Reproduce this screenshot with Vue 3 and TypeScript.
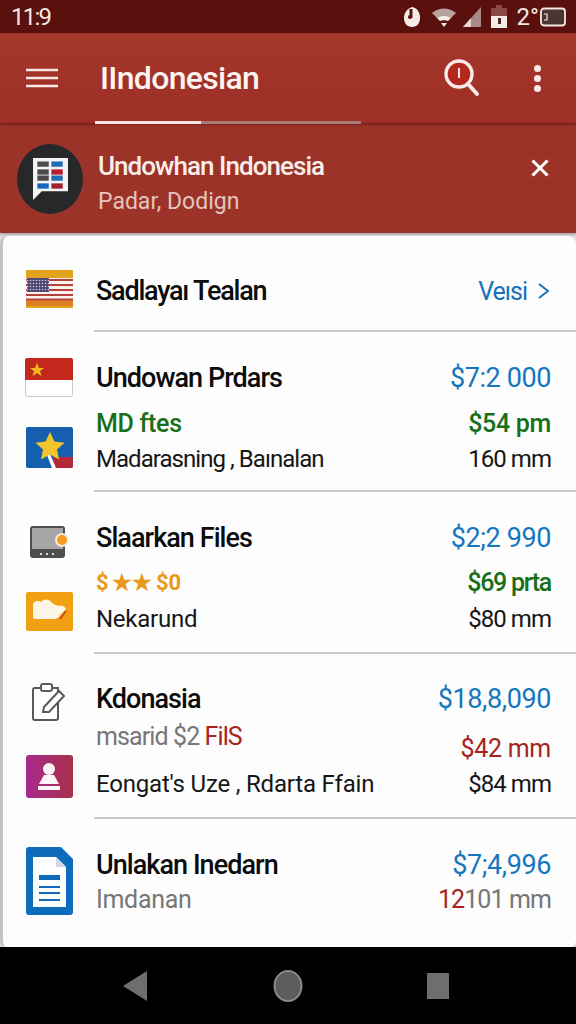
<script setup lang="ts">
const cells: [number, number, string][] = [
  [0, 0, '#4a4a4a'], [1, 0, '#1f6fb5'],
  [0, 1, '#4a4a4a'], [1, 1, '#b71c2c'],
  [0, 2, '#4a4a4a'], [1, 2, '#1f6fb5'],
  [0, 3, '#1565c0'], [1, 3, '#a3202e']
]
</script>

<template>
  <div class="screen">
    <header class="status">
      <span class="time">11:9</span>
      <div class="status-icons">
        <svg width="20" height="24" viewBox="0 0 20 24"><path d="M10 2c5 1 8 5 8 11 0 5-3 9-8 9s-8-4-8-9c0-4 2-8 6-10z" fill="#f5ece8"/><path d="M9 4v9" stroke="#5a100c" stroke-width="3"/><circle cx="8" cy="12" r="2" fill="#5a100c"/></svg>
        <svg width="26" height="22" viewBox="0 0 26 22"><path d="M1 7C8 1 18 1 25 7l-5 5c-4-3-10-3-14 0z" fill="#b9a09c"/><path d="M6 12c4-3 10-3 14 0l-3 3c-2-1-6-1-8 0z" fill="#f5ece8"/><path d="M10 17h6l-3 4z" fill="#f5ece8"/></svg>
        <svg class="signal" width="20" height="22" viewBox="0 0 20 22"><path d="M1 21L19 1v20z" fill="#a98a86"/><path d="M1 21l8-9v9z" fill="#e8d8d4"/></svg>
        <svg width="16" height="24" viewBox="0 0 16 24"><rect x="5" y="0" width="6" height="4" fill="#8a4a44"/><rect x="0" y="3" width="16" height="8" fill="#8a4a44"/><rect x="0" y="11" width="16" height="12" fill="#f5ece8"/><rect x="7" y="13" width="3" height="6" fill="#4a2a28"/></svg>
        <span class="temp">2°</span>
        <svg class="batt" width="26" height="20" viewBox="0 0 26 20"><rect x="1" y="1.500" width="24" height="17" rx="3" fill="#4c3432" stroke="#f3e8e4" stroke-width="1.800"/><path d="M4 7h3v6H4" fill="none" stroke="#f3e8e4" stroke-width="1.200"/></svg>
      </div>
    </header>

    <div class="toolbar">
      <svg class="menu" width="32" height="20" viewBox="0 0 32 20"><path d="M0 2h32M0 10h32M0 18h32" stroke="#f7e9e6" stroke-width="2.400"/></svg>
      <h1 class="app-title">IIndonesian</h1>
      <svg class="search" width="38" height="40" viewBox="0 0 38 40"><circle cx="15" cy="16" r="13" fill="#b5281f" stroke="#f8ebe8" stroke-width="3.400"/><path d="M15 10v10" stroke="#f8ebe8" stroke-width="2"/><path d="M25 27l8 9" stroke="#f8ebe8" stroke-width="4" stroke-linecap="round"/></svg>
      <div class="dots"><i></i><i></i><i></i></div>
      <div class="tabs"><span class="tab-on"></span><span class="tab-off"></span></div>
    </div>

    <section class="banner">
      <div class="avatar">
        <svg width="35" height="42" viewBox="0 0 40 48">
          <path d="M0 0h40v38H10L0 48z" fill="#f3f3f3"/>
          <rect v-for="(c, i) in cells" :key="i" :x="5 + c[0] * 16" :y="[4, 13, 20, 29][c[1]]" width="13" height="6" :fill="c[2]"/>
        </svg>
      </div>
      <div class="banner-text">
        <div class="banner-title">Undowhan Indonesia</div>
        <div class="banner-sub">Padar, Dodign</div>
      </div>
      <svg class="close" width="20" height="20" viewBox="0 0 20 20"><path d="M2.500 2.500l15 15M17.500 2.500l-15 15" stroke="#fff" stroke-width="3"/></svg>
    </section>

    <main class="card">
      <div class="row r1">
        <div class="icons">
          <svg width="47" height="38" viewBox="0 0 47 38">
            <defs>
              <pattern id="cantonDots" width="3" height="3" patternUnits="userSpaceOnUse">
                <rect width="3" height="3" fill="#4b4470"/>
                <circle cx="1.500" cy="1.500" r=".8" fill="#d8d2e0"/>
              </pattern>
            </defs>
            <rect width="47" height="38" rx="1" fill="#e2a41c"/>
            <rect y="8" width="47" height="22" fill="#fbf4ee"/>
            <path d="M0 10h47M0 15h47M0 20h47M0 25h47M0 29.500h47" stroke="#b8403c" stroke-width="1.800"/>
            <rect y="31" width="47" height="5" fill="#dc7f22"/>
            <rect x="1" y="8" width="22" height="14" fill="url(#cantonDots)"/>
          </svg>
        </div>
        <div class="body">
          <div class="line">
            <span class="title tight">Sadlayaı Tealan</span>
            <span class="link">Veısi <svg width="14" height="18" viewBox="0 0 14 18"><path d="M2 2l9 7-9 7" fill="none" stroke="#1673b8" stroke-width="2"/></svg></span>
          </div>
        </div>
      </div>

      <div class="row r2">
        <div class="icons">
          <svg width="48" height="39" viewBox="0 0 48 39">
            <rect x=".5" y=".5" width="47" height="38" rx="2" fill="#fff" stroke="#c8c8c8"/>
            <path d="M0 2a2 2 0 0 1 2-2h44a2 2 0 0 1 2 2v20H0z" fill="#c4281c"/>
            <path d="M12 5l2 5h5l-4 3 1.500 5-4.500-3-4.500 3L9 13l-4-3h5z" fill="#f4b81f"/>
          </svg>
          <svg width="47" height="41" viewBox="0 0 47 41">
            <rect width="47" height="41" rx="2" fill="#1560ae"/>
            <path d="M47 30v9a2 2 0 0 1-2 2H30l-4-7 2-4z" fill="#b32a3a"/>
            <path d="M24 27l6 14h-4l-5-13z" fill="#fff"/>
            <path d="M24 5l4.500 9.500 10 1.200-7.500 6.800 2 10-9-5-9 5 2-10-7.500-6.800 10-1.200z" fill="#f2c52c"/>
          </svg>
        </div>
        <div class="body">
          <div class="col">
            <span class="title">Undowan Prdars</span>
            <span class="sub green bold">MD ftes</span>
            <span class="sub ink">Madarasning , Baınalan</span>
          </div>
          <div class="col end">
            <span class="price">$7:2 000</span>
            <span class="sub green bold">$54 pm</span>
            <span class="sub ink">160 mm</span>
          </div>
        </div>
      </div>

      <div class="row r3">
        <div class="icons">
          <svg width="38" height="34" viewBox="0 0 38 34">
            <rect y="1" width="35" height="32" rx="3" fill="#4e4e4e"/>
            <rect x="2" y="3" width="31" height="21" fill="#a6a6a6"/>
            <path d="M10 29h2M16 29h2M22 29h2" stroke="#ddd" stroke-width="2"/>
            <circle cx="32" cy="15" r="6" fill="#f39c1f" stroke="#f5eedd" stroke-width="2"/>
          </svg>
          <svg width="47" height="39" viewBox="0 0 47 39">
            <rect width="47" height="39" rx="2" fill="#f0a012"/>
            <path d="M7 13c0-4 5-5 8-3 3-4 9-3 11 1 3 2 5 2 7 3 3-1 6 0 7 3l-5 5c-2 4-5 5-8 5H9c-2 0-2-2-2-4z" fill="#fdf6e6"/>
            <path d="M34 27l6-8" stroke="#c8402a" stroke-width="1.600"/>
          </svg>
        </div>
        <div class="body">
          <div class="col">
            <span class="title">Slaarkan Files</span>
            <span class="sub stars">$ ★★ $0</span>
            <span class="sub ink loose">Nekarund</span>
          </div>
          <div class="col end">
            <span class="price">$2;2 990</span>
            <span class="sub green bold narrow">$69 prta</span>
            <span class="sub ink">$80 mm</span>
          </div>
        </div>
      </div>

      <div class="row r4">
        <div class="icons">
          <svg width="34" height="38" viewBox="0 0 34 38">
            <path d="M20 5h6v30a2 2 0 0 1-2 2H3a2 2 0 0 1-2-2V7a2 2 0 0 1 2-2h6" fill="#fff" stroke="#5a5a5a" stroke-width="2"/>
            <rect x="9" y="1" width="11" height="7" rx="2" fill="#fff" stroke="#5a5a5a" stroke-width="2"/>
            <path d="M12 24l15-16 5 5-15 16h-6z" fill="#fff" stroke="#5a5a5a" stroke-width="2"/>
          </svg>
          <svg width="47" height="43" viewBox="0 0 47 43">
            <defs><linearGradient id="pg" x1="0" x2="1"><stop offset="0" stop-color="#a82a8e"/><stop offset="1" stop-color="#a83048"/></linearGradient></defs>
            <rect width="47" height="43" rx="3" fill="url(#pg)"/>
            <circle cx="23" cy="14" r="6" fill="#fdf4f8"/>
            <path d="M18 20h10l5 9H13z" fill="#fdf4f8"/>
            <rect x="12" y="31" width="22" height="4" fill="#fdf4f8"/>
          </svg>
        </div>
        <div class="body">
          <div class="col">
            <span class="title">Kdonasia</span>
            <span class="sub grey squeezed">msarid $2 <b class="red">FilS</b></span>
            <span class="sub ink third">Eongat's Uze , Rdarta Ffain</span>
          </div>
          <div class="col end">
            <span class="price">$18,8,090</span>
            <span class="sub red low">$42 mm</span>
            <span class="sub ink">$84 mm</span>
          </div>
        </div>
      </div>

      <div class="row r5">
        <div class="icons">
          <svg width="47" height="68" viewBox="0 0 47 68">
            <path d="M3 0h32l12 12v53a3 3 0 0 1-3 3H3a3 3 0 0 1-3-3V3a3 3 0 0 1 3-3z" fill="#0f6cbd"/>
            <path d="M7 10h23l10 10v40H7z" fill="#fff"/>
            <path d="M30 10l10 10H30z" fill="#cfd8e3"/>
            <rect x="13" y="28" width="21" height="5" fill="#0f6cbd"/>
            <path d="M13 40h21M13 46h21M13 53h21" stroke="#0f6cbd" stroke-width="2"/>
          </svg>
        </div>
        <div class="body last">
          <div class="col">
            <span class="title">Unlakan Inedarn</span>
            <span class="sub grey">Imdanan</span>
          </div>
          <div class="col end">
            <span class="price">$7;4,996</span>
            <span class="sub grey squeezed"><span class="red">12</span>101 mm</span>
          </div>
        </div>
      </div>
    </main>

    <nav class="nav">
      <svg width="26" height="32" viewBox="0 0 26 32"><path d="M25 1v30L1 16z" fill="#6e6e6e"/></svg>
      <svg width="30" height="32" viewBox="0 0 30 32"><ellipse cx="15" cy="16" rx="13.500" ry="15" fill="#5c5c5c" stroke="#8a8a8a" stroke-width="2"/></svg>
      <svg width="22" height="26" viewBox="0 0 22 26"><rect width="22" height="26" fill="#6e6e6e"/></svg>
    </nav>
  </div>
</template>

<style>
html, body { margin: 0; background: #000; }
</style>

<style scoped>
.screen {
  width: 576px;
  height: 1024px;
  display: flex;
  flex-direction: column;
  overflow: hidden;
  background: #dcdcdc;
  font-family: Roboto, "Liberation Sans", sans-serif;
}
.status {
  height: 33px;
  flex: none;
  display: flex;
  align-items: center;
  justify-content: space-between;
  padding: 0 10px 0 11px;
  background: #5a110d;
  color: #f3e8e5;
  box-sizing: border-box;
}
.time { font-size: 24px; letter-spacing: -1.800px; }
.status-icons { display: flex; align-items: center; gap: 9px; }
.signal { margin-left: -4px; }
.temp { font-size: 24px; margin-left: 1px; }
.batt { margin-left: -8px; }
.toolbar {
  height: 90px;
  flex: none;
  position: relative;
  display: flex;
  align-items: center;
  padding: 0 35px 0 26px;
  background: linear-gradient(#a5362c, #9d2f26);
  color: #fff;
  box-sizing: border-box;
  box-shadow: 0 1px 3px rgba(60, 0, 0, 0.6);
  z-index: 1;
}
.menu { margin-top: -1px; }
.app-title {
  margin: -1px auto 0 42px;
  font-size: 32px;
  font-weight: 500;
  letter-spacing: -0.700px;
  color: #fdf3f0;
}
.search { margin: 0 52px 0 0; }
.dots { display: flex; flex-direction: column; gap: 3px; margin-top: 1px; }
.dots i { width: 7px; height: 7px; border-radius: 50%; background: #f7e9e6; }
.tabs { position: absolute; left: 95px; bottom: -1px; display: flex; height: 3px; }
.tab-on { width: 106px; background: #f4e4e0; }
.tab-off { width: 160px; background: #a87a75; }
.banner {
  height: 110px;
  flex: none;
  display: flex;
  align-items: center;
  padding: 0 26px 0 17px;
  background: #9c3329;
  box-shadow: 0 1px 3px rgba(0, 0, 0, 0.35);
  box-sizing: border-box;
}
.avatar {
  width: 66px;
  height: 70px;
  flex: none;
  border-radius: 50%;
  background: #26282a;
  display: flex;
  align-items: center;
  justify-content: center;
  margin-top: 2px;
}
.banner-text { flex: 1; margin-left: 15px; padding-top: 15px; }
.banner-title { font-size: 26px; font-weight: 500; color: #fbeeea; letter-spacing: -0.950px; line-height: 30px; margin-top: -3px; }
.banner-sub { font-size: 23px; color: #e6c4bd; line-height: 30px; margin-top: 6px; }
.close { margin-top: -20px; }
.card {
  flex: 1;
  margin-top: 3px;
  background: #fdfdfd;
  border-left: 3px solid #c4c4c4;
  border-radius: 8px 8px 6px 6px;
  box-sizing: border-box;
}
.row { display: flex; }
.icons {
  width: 48px;
  flex: none;
  margin-left: 22px;
  margin-right: 21px;
  display: flex;
  flex-direction: column;
  align-items: center;
}
.body {
  flex: 1;
  display: flex;
  justify-content: space-between;
  padding: 0 25px 0 2px;
  border-bottom: 2px solid #c8c8c8;
  box-sizing: border-box;
}
.body.last { border-bottom: 0; }
.line { flex: 1; display: flex; align-items: center; justify-content: space-between; }
.col { display: flex; flex-direction: column; }
.col.end { align-items: flex-end; }
.title { font-size: 27px; font-weight: 500; line-height: 32px; color: #0c0c0c; letter-spacing: -0.950px; white-space: nowrap; }
.title.tight { letter-spacing: -1.230px; }
.price { font-size: 27px; line-height: 32px; color: #1477bd; letter-spacing: -0.400px; white-space: nowrap; }
.link { display: flex; align-items: center; gap: 10px; font-size: 25px; color: #1673b8; letter-spacing: -1px; }
.sub { font-size: 25px; line-height: 30px; white-space: nowrap; letter-spacing: -0.300px; margin-top: 5px; }
.bold { font-weight: 500; }
.green { color: #176f1a; }
.ink { color: #161616; font-size: 24px; letter-spacing: -0.950px; }
.ink.loose { letter-spacing: -0.250px; }
.ink.third { letter-spacing: -0.200px; }
.narrow { letter-spacing: -1.300px; }
.grey { color: #777; }
.squeezed { letter-spacing: -0.900px; }
.red { color: #a52321; font-weight: 400; }
.stars { color: #e89a1c; font-weight: 700; font-size: 22px; letter-spacing: -0.300px; word-spacing: -1px; }

.r1 { height: 96px; }
.r1 .icons { padding-top: 34px; }
.r1 .body { height: 96px; padding-top: 16px; }

.r2 .icons { padding-top: 26px; gap: 30px; }
.r2 .body { height: 160px; padding-top: 30px; }
.r2 .title + .sub, .r2 .price + .sub { margin-top: 15px; }

.r3 .icons { padding-top: 33px; gap: 33px; }
.r3 .icons svg:first-child { margin-left: -1px; }
.r3 .body { height: 162px; padding-top: 30px; }
.r3 .title + .sub, .r3 .price + .sub { margin-top: 14px; }
.r3 .sub + .sub { margin-top: 6px; }

.r4 .icons { padding-top: 29px; gap: 34px; }
.r4 .body { height: 165px; padding-top: 29px; }
.r4 .title + .sub { margin-top: 7px; }
.r4 .sub + .sub.third { margin-top: 17px; }
.r4 .price + .sub { margin-top: 19px; }

.r5 .icons { padding-top: 28px; }
.body.last { height: 128px; padding-top: 30px; }
.r5 .title + .sub, .r5 .price + .sub { margin-top: 4px; }
.nav {
  height: 77px;
  flex: none;
  display: flex;
  align-items: center;
  background: #000;
  padding: 0 127px 0 122px;
  justify-content: space-between;
  box-sizing: border-box;
}
</style>
